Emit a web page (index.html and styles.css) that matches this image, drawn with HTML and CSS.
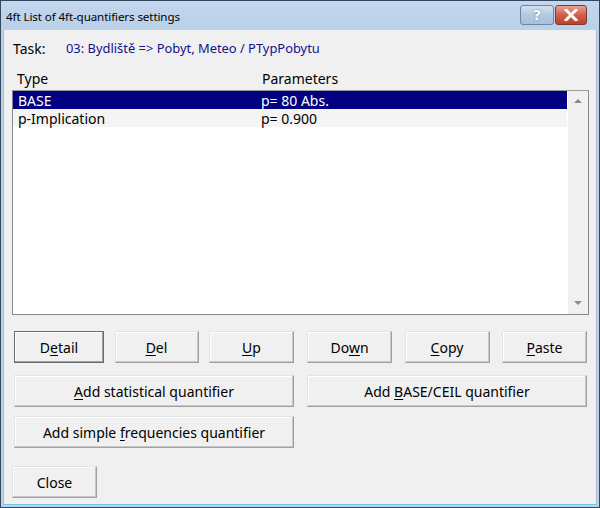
FILE: index.html
```html
<!DOCTYPE html>
<html>
<head>
<meta charset="utf-8">
<link rel="stylesheet" href="styles.css">
</head>
<body>
<div class="window">
  <div class="titlebar">
    <span class="title">4ft List of 4ft-quantifiers settings</span>
    <div class="caption-buttons">
      <div class="cap-btn help">?</div>
      <div class="cap-btn close">
        <svg width="14" height="12" viewBox="0 0 14 12"><path d="M2 1 L12 11 M12 1 L2 11" stroke="#fff" stroke-width="3" stroke-linecap="square"/></svg>
      </div>
    </div>
  </div>
  <div class="client">
    <div class="task-row">
      <span class="task-label">Task:</span>
      <span class="task-value">03: Bydliště =&gt; Pobyt, Meteo / PTypPobytu</span>
    </div>
    <div class="headers">
      <span class="col-type">Type</span>
      <span class="col-params">Parameters</span>
    </div>
    <div class="listbox">
      <div class="rows">
        <div class="row selected"><span class="col-type">BASE</span><span class="col-params">p= 80 Abs.</span></div>
        <div class="row alt"><span class="col-type">p-Implication</span><span class="col-params">p= 0.900</span></div>
      </div>
      <div class="scrollbar">
        <span class="arrow up"></span>
        <span class="arrow down"></span>
      </div>
    </div>
    <div class="btn-row">
      <div class="group left">
        <button class="btn default">D<u>e</u>tail</button>
        <button class="btn"><u>D</u>el</button>
        <button class="btn"><u>U</u>p</button>
      </div>
      <div class="group right">
        <button class="btn">Do<u>w</u>n</button>
        <button class="btn"><u>C</u>opy</button>
        <button class="btn"><u>P</u>aste</button>
      </div>
    </div>
    <div class="btn-row wide-row">
      <button class="btn wide"><u>A</u>dd statistical quantifier</button>
      <button class="btn wide">Add <u>B</u>ASE/CEIL quantifier</button>
    </div>
    <div class="btn-row wide-row third">
      <button class="btn wide">Add simple <u>f</u>requencies quantifier</button>
    </div>
    <div class="close-row">
      <button class="btn close-btn">Close</button>
    </div>
  </div>
</div>
</body>
</html>
```

FILE: styles.css
```css
html, body {
  margin: 0;
  padding: 0;
  background: #ffffff;
}
body {
  font-family: "Noto Sans", "Open Sans", sans-serif;
  font-size: 14px;
  color: #000;
}
.window {
  width: 600px;
  height: 508px;
  box-sizing: border-box;
  border: 1px solid #33465e;
  background: #bcd3ea;
  padding: 0 3px 3px 3px;
  display: flex;
  flex-direction: column;
}
.titlebar {
  height: 29px;
  display: flex;
  align-items: center;
  justify-content: space-between;
  background: linear-gradient(#c3d7ee, #b9d0e9);
  margin: 0 -3px;
  padding: 0 0 0 5px;
}
.title {
  font-size: 11.6px;
  letter-spacing: -0.1px;
  color: #000;
  padding-top: 1px;
}
.caption-buttons {
  display: flex;
  align-self: flex-start;
  margin-top: 4px;
  margin-right: 12px;
  gap: 1px;
}
.cap-btn {
  height: 20px;
  box-sizing: border-box;
  border: 1px solid #6f84a0;
  border-radius: 3px;
  display: flex;
  align-items: center;
  justify-content: center;
}
.cap-btn.help {
  width: 34px;
  background: linear-gradient(#d3e1f1, #b3c9e3 50%, #a8c0dd);
  color: #fff;
  font-weight: bold;
  font-size: 14px;
  text-shadow: 0 0 2px #5a708e;
  font-family: "DejaVu Sans", sans-serif;
}
.cap-btn.close {
  width: 32px;
  border-color: #7a3a30;
  background: linear-gradient(#e7a293, #d0604b 50%, #c2402b);
}
.client {
  flex: 1;
  background: #f0f0f0;
  border-left: 1px solid #a9bdd4;
  border-right: 1px solid #a9bdd4;
  border-bottom: 1px solid #6fc8ea;
  margin: 0 -1px -1px -1px;
  padding: 0 8px 0 8px;
  display: flex;
  flex-direction: column;
}
.task-row {
  display: flex;
  height: 20px;
  align-items: center;
  margin-top: 8px;
  padding-left: 1px;
}
.task-label {
  width: 53px;
}
.task-value {
  color: #12128a;
  font-size: 12.9px;
}
.headers {
  display: flex;
  height: 20px;
  align-items: center;
  margin-top: 10px;
  padding-left: 5px;
}
.col-type {
  width: 243px;
}
.headers .col-type {
  width: 245px;
}
.listbox {
  height: 225px;
  box-sizing: border-box;
  border: 1px solid #828790;
  border-top-color: #9c9c9c;
  background: #fff;
  display: flex;
  margin-top: 2px;
  margin-right: -1px;
}
.rows {
  flex: 1;
}
.row {
  height: 18px;
  display: flex;
  align-items: center;
  padding-left: 5px;
}
.row.selected {
  background: #000080;
  color: #fff;
}
.row.alt {
  background: #f4f4f4;
}
.scrollbar {
  width: 20px;
  background: #f0f0f0;
  border-left: 1px solid #fff;
  display: flex;
  flex-direction: column;
  justify-content: space-between;
  align-items: center;
  padding: 8px 0 9px;
}
.arrow {
  width: 0;
  height: 0;
  border-left: 4px solid transparent;
  border-right: 4px solid transparent;
}
.arrow.up {
  border-bottom: 4px solid #8a8a8a;
}
.arrow.down {
  border-top: 4px solid #8a8a8a;
}
.btn-row {
  display: flex;
  justify-content: space-between;
  margin-top: 16px;
  padding-left: 2px;
  padding-right: 1px;
}
.group {
  display: flex;
  justify-content: space-between;
  width: 280px;
}
.btn {
  height: 32px;
  box-sizing: border-box;
  font-family: "Noto Sans", "Open Sans", sans-serif;
  font-size: 14px;
  color: #000;
  background: #f0f0f0;
  border: 1px solid;
  border-color: #e3e3e3 #a0a0a0 #a0a0a0 #e3e3e3;
  box-shadow: inset -1px -1px 0 #c8c8c8, inset 1px 1px 0 #ffffff;
  padding: 0;
  margin: 0;
}
.btn u {
  text-decoration: underline;
  text-underline-offset: 2px;
}
.group .btn {
  width: 85px;
}
.group.left .btn.default {
  width: 90px;
  border-color: #6b6b6b;
  box-shadow: inset -1px -1px 0 #a0a0a0, inset 1px 1px 0 #ffffff;
}
.group.left .btn:nth-child(2) {
  width: 84px;
}
.wide-row {
  margin-top: 12px;
}
.wide-row.third {
  margin-top: 9px;
}
.btn.wide {
  width: 280px;
}
.close-row {
  margin-top: 18px;
}
.btn.close-btn {
  width: 85px;
}
```
